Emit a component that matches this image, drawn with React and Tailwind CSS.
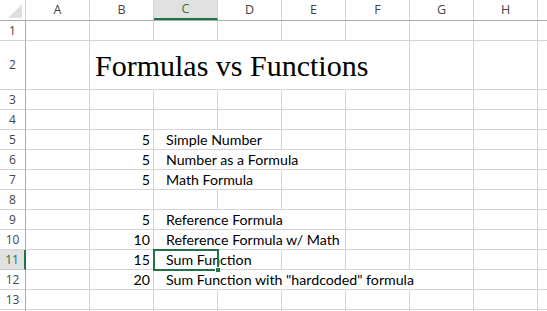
import React from 'react';

const cols = ['A', 'B', 'C', 'D', 'E', 'F', 'G', 'H'];

// span = how many columns the text of column C spills over
const rows = [
  { n: 1 },
  { n: 2, title: 'Formulas vs Functions' },
  { n: 3 },
  { n: 4 },
  { n: 5, b: '5', c: 'Simple Number', span: 2 },
  { n: 6, b: '5', c: 'Number as a Formula', span: 3 },
  { n: 7, b: '5', c: 'Math Formula', span: 2 },
  { n: 8 },
  { n: 9, b: '5', c: 'Reference Formula', span: 3 },
  { n: 10, b: '10', c: 'Reference Formula w/ Math', span: 3 },
  { n: 11, b: '15', c: 'Sum Function', span: 2, sel: true },
  { n: 12, b: '20', c: 'Sum Function with "hardcoded" formula', span: 5 },
  { n: 13 },
  { n: 14, hideLabel: true },
];

function Cell({ hideRight, children, className = '' }) {
  return (
    <div
      className={`relative w-[64px] shrink-0 border-b border-b-[#d4d4d4] border-r ${
        hideRight ? 'border-r-transparent' : 'border-r-[#d4d4d4]'
      } ${className}`}
    >
      {children}
    </div>
  );
}

function Row({ row }) {
  const height = row.n === 2 ? 'h-[49px]' : 'h-[20px]';
  // title lives in B and covers B..F
  const hidden = (i) => {
    if (row.title) return i >= 1 && i <= 4;
    if (row.span) return i >= 2 && i < 2 + row.span - 1;
    return false;
  };

  return (
    <div className={`flex ${height}`}>
      <div
        className={`w-[26px] shrink-0 flex items-center justify-center text-[12px] border-b ${
          row.sel
            ? 'bg-[#e1e1e1] text-[#217346] border-r-2 border-r-[#217346] border-b-[#c6c6c6]'
            : 'text-[#444] border-r border-r-[#ababab] border-b-[#d4d4d4]'
        }`}
        style={{ fontFamily: '"Open Sans", sans-serif' }}
      >
        {!row.hideLabel && row.n}
      </div>
      {cols.map((c, i) => (
        <Cell key={c} hideRight={hidden(i)}>
          {row.title && i === 1 && (
            <div
              className="absolute inset-y-0 left-0 z-10 flex items-center pl-[5px] whitespace-nowrap text-[30px] text-black"
              style={{ fontFamily: '"Liberation Serif", serif' }}
            >
              {row.title}
            </div>
          )}
          {row.b && i === 1 && (
            <div className="absolute inset-0 flex items-center justify-end pr-[3px] text-[14.2px] text-black" style={{ fontFamily: 'Lato, sans-serif' }}>
              {row.b}
            </div>
          )}
          {row.c && i === 2 && (
            <div
              className="absolute inset-y-0 left-0 z-10 flex items-center pl-[12px] whitespace-nowrap text-[14.2px] text-black"
              style={{ fontFamily: 'Lato, sans-serif' }}
            >
              {row.c}
            </div>
          )}
          {row.sel && i === 2 && (
            <div className="absolute -left-[1px] -top-[1px] w-[66px] h-[22px] border-2 border-[#217346] z-20">
              <div className="absolute -right-[4px] -bottom-[4px] w-[6px] h-[6px] bg-[#217346] border border-white" />
            </div>
          )}
        </Cell>
      ))}
      <div className="flex-1 border-b border-b-[#d4d4d4]" />
    </div>
  );
}

export default function App() {
  return (
    <div className="w-[547px] h-[311px] overflow-hidden bg-white">
      {/* column header */}
      <div className="flex h-[21px] border-b border-b-[#ababab]" style={{ fontFamily: '"Open Sans", sans-serif' }}>
        <div className="relative w-[26px] shrink-0 border-r border-r-[#d4d4d4]">
          <svg className="absolute left-[8px] top-[4px]" width="14" height="14" viewBox="0 0 14 14">
            <polygon points="14,0 14,14 0,14" fill="#dfdfdf" />
          </svg>
        </div>
        {cols.map((c) => (
          <div
            key={c}
            className={`w-[64px] shrink-0 flex items-center justify-center text-[12.5px] border-r border-r-[#d4d4d4] ${
              c === 'C' ? 'bg-[#e1e1e1] text-[#217346] border-b-2 border-b-[#217346]' : 'text-[#444]'
            }`}
          >
            {c}
          </div>
        ))}
        <div className="flex-1" />
      </div>
      {rows.map((r) => (
        <Row key={r.n} row={r} />
      ))}
    </div>
  );
}
